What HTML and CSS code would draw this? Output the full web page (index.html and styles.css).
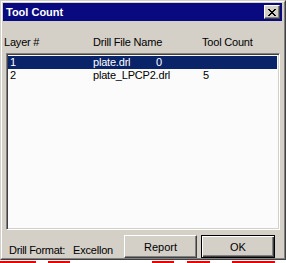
FILE: index.html
```html
<!DOCTYPE html>
<html>
<head>
<meta charset="utf-8">
<link rel="stylesheet" href="styles.css">
</head>
<body>
<div class="window">
  <div class="frame">
    <div class="titlebar">
      <span class="title">Tool Count</span>
      <button class="close" aria-label="Close">
        <svg width="8" height="7" viewBox="0 0 8 7" shape-rendering="crispEdges"><path fill="#000" d="M0 0h2v1H0zM6 0h2v1H6zM1 1h2v1H1zM5 1h2v1H5zM2 2h4v1H2zM3 3h2v1H3zM2 4h4v1H2zM1 5h2v1H1zM5 5h2v1H5zM0 6h2v1H0zM6 6h2v1H6z"/></svg>
      </button>
    </div>
    <div class="client">
      <div class="header">
        <span class="h1">Layer #</span>
        <span class="h2">Drill File Name</span>
        <span class="h3">Tool Count</span>
      </div>
      <div class="list">
        <div class="row selected short">
          <span class="c1">1</span><span class="c2">plate.drl</span><span class="c3">0</span>
        </div>
        <div class="row long">
          <span class="c1">2</span><span class="c2">plate_LPCP2.drl</span><span class="c3">5</span>
        </div>
      </div>
      <div class="footer">
        <span class="fmt-label">Drill Format:</span>
        <span class="fmt-value">Excellon</span>
        <button class="btn report">Report</button>
        <button class="btn default">OK</button>
      </div>
    </div>
  </div>
</div>
<div class="underline">
  <span class="seg s1"></span><span class="seg s2"></span><span class="seg s3"></span><span class="seg s4"></span><span class="seg s5"></span>
</div>
</body>
</html>
```

FILE: styles.css
```css
html, body {
  margin: 0;
  padding: 0;
  background: #fff;
  font-family: "Liberation Sans", Arial, sans-serif;
  font-size: 11px;
  color: #000;
}

.window {
  width: 286px;
  height: 260px;
  box-sizing: border-box;
  border: 1px solid;
  border-color: #d4d0c8 #404040 #404040 #d4d0c8;
  background: #d4d0c8;
}

.frame {
  height: 100%;
  box-sizing: border-box;
  border: 1px solid;
  border-color: #fff #808080 #808080 #fff;
  padding: 1px 2px 0 1px;
  display: flex;
  flex-direction: column;
}

.titlebar {
  height: 18px;
  flex: none;
  background: #0a0a80;
  display: flex;
  align-items: center;
  justify-content: space-between;
  padding: 0 2px 0 3px;
}

.title {
  color: #fff;
  font-weight: bold;
  font-size: 11px;
  line-height: 13px;
}

.close {
  width: 16px;
  height: 14px;
  box-sizing: border-box;
  padding: 0;
  margin: 0;
  border: 1px solid;
  border-color: #fff #404040 #404040 #fff;
  box-shadow: inset -1px -1px #808080;
  background: #d4d0c8;
  display: flex;
  align-items: center;
  justify-content: center;
}

.close svg {
  display: block;
}

.client {
  flex: 1;
  display: flex;
  flex-direction: column;
  letter-spacing: -0.2px;
}

.header {
  margin-top: 15px;
  height: 13px;
  line-height: 13px;
  padding-left: 1px;
  display: flex;
  white-space: nowrap;
}

.h1 { width: 89px; }
.h2 { width: 109px; }

.list {
  margin-top: 4px;
  margin-left: 3px;
  width: 274px;
  height: 177px;
  box-sizing: border-box;
  border: 1px solid;
  border-color: #808080 #fff #fff #808080;
  box-shadow: inset 1px 1px #404040, inset -1px -1px #d4d0c8;
  background: #fbfbfb;
  padding: 2px 2px 0 1px;
}

.row {
  height: 13px;
  line-height: 13px;
  display: flex;
  padding-left: 2px;
  white-space: nowrap;
}

.row .c1 { width: 83px; }
.row.short .c2 { width: 63px; }
.row.long .c2 { width: 110px; }

.selected {
  background: #0a246a;
  color: #fff;
}

.footer {
  margin-top: 5px;
  height: 23px;
  display: flex;
  align-items: center;
  padding: 0 7px 0 6px;
}

.fmt-label,
.fmt-value {
  align-self: flex-end;
  line-height: 13px;
  margin-bottom: 1px;
  white-space: nowrap;
}

.fmt-label { width: 64px; letter-spacing: -0.3px; }

.btn {
  height: 23px;
  box-sizing: border-box;
  margin: 0;
  padding: 0;
  font-family: "Liberation Sans", Arial, sans-serif;
  font-size: 11px;
  color: #000;
  background: #d4d0c8;
  border: 1px solid;
  border-color: #fff #404040 #404040 #fff;
  box-shadow: inset -1px -1px #808080;
}

.report {
  width: 73px;
  margin-left: auto;
}

.default {
  width: 74px;
  margin-left: 4px;
  border-color: #000;
  box-shadow: inset 1px 1px #fff, inset -1px -1px #404040, inset -2px -2px #808080;
}

.underline {
  display: flex;
  margin-top: 1px;
  height: 2px;
}

.seg {
  height: 2px;
  background: #f00000;
}

.s1 { width: 36px; }
.s2 { width: 22px; margin-left: 12px; }
.s3 { width: 22px; margin-left: 82px; }
.s4 { width: 23px; margin-left: 13px; }
.s5 { width: 43px; margin-left: 22px; }
```
